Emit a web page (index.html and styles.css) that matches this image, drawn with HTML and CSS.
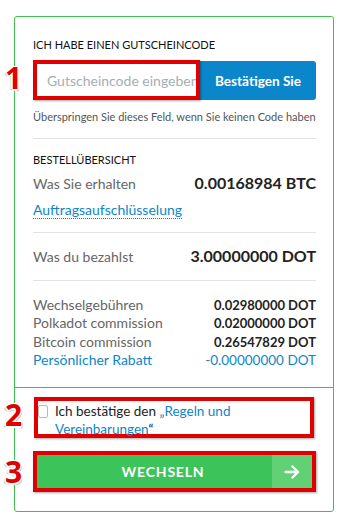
FILE: index.html
```html
<!DOCTYPE html>
<html lang="de">
<head>
<meta charset="utf-8">
<link rel="stylesheet" href="styles.css">
</head>
<body>
<div class="page">
  <div class="card">
    <div class="top">
      <div class="heading">ICH HABE EINEN GUTSCHEINCODE</div>
      <div class="promo">
        <input class="promo-input" type="text" placeholder="Gutscheincode eingeben">
        <button class="promo-btn">Bestätigen Sie</button>
      </div>
      <div class="hint">Überspringen Sie dieses Feld, wenn Sie keinen Code haben</div>
      <hr class="sep sep-1">
      <div class="heading heading-2">BESTELLÜBERSICHT</div>
      <div class="row big">
        <span class="label">Was Sie erhalten</span>
        <span class="value">0.00168984 BTC</span>
      </div>
      <div class="link-row"><a class="link">Auftragsaufschlüsselung</a></div>
      <hr class="sep sep-2">
      <div class="row big">
        <span class="label">Was du bezahlst</span>
        <span class="value">3.00000000 DOT</span>
      </div>
      <hr class="sep sep-3">
      <div class="fees">
        <div class="row small"><span class="label">Wechselgebühren</span><span class="value">0.02980000 DOT</span></div>
        <div class="row small"><span class="label">Polkadot commission</span><span class="value">0.02000000 DOT</span></div>
        <div class="row small"><span class="label">Bitcoin commission</span><span class="value">0.26547829 DOT</span></div>
        <div class="row small blue"><span class="label">Persönlicher Rabatt</span><span class="value">-0.00000000 DOT</span></div>
      </div>
    </div>
    <div class="bottom">
      <div class="agree">
        <span class="checkbox"></span>
        <p class="agree-text">
          <span class="line">Ich bestätige den <span class="blue-text">„Regeln und</span></span>
          <span class="line"><span class="blue-text">Vereinbarungen</span>“</span>
        </p>
      </div>
      <div class="submit-wrap">
        <button class="submit">
          <span class="submit-label">WECHSELN</span>
          <span class="submit-arrow">
            <svg width="16" height="14" viewBox="0 0 16 14"><path d="M1.5 7H14M8.5 1.5L14 7L8.5 12.5" fill="none" stroke="#fff" stroke-width="2.4" stroke-linecap="round" stroke-linejoin="round"/></svg>
          </span>
        </button>
      </div>
    </div>
  </div>
  <span class="num num-1">1</span>
  <span class="num num-2">2</span>
  <span class="num num-3">3</span>
</div>
</body>
</html>
```

FILE: styles.css
```css
* { box-sizing: border-box; }
html, body { margin: 0; padding: 0; background: #fff; }
body {
  font-family: Lato, "Open Sans", "Liberation Sans", sans-serif;
  color: #222;
  width: 349px;
  height: 525px;
  overflow: hidden;
}
.page {
  position: relative;
  padding: 16px 0 0 14px;
}
.card {
  width: 320px;
  height: 496px;
  border: 1px solid #3fbf50;
  border-radius: 3px;
  display: flex;
  flex-direction: column;
}
.top {
  padding: 21px 17px 0 18px;
  height: 371px;
  border-bottom: 1px solid #3fbf50;
}
.heading {
  font-size: 11px;
  line-height: 14px;
  color: #111;
}
.promo {
  display: flex;
  margin-top: 8px;
  height: 40px;
}
.promo-input {
  width: 167px;
  height: 40px;
  border: 4px solid #e00000;
  box-shadow: 1px 1px 2px rgba(0,0,0,0.35);
  padding: 0 0 0 10px;
  font-family: Lato, "Open Sans", sans-serif;
  font-size: 14px;
  color: #333;
  outline: none;
  margin: 0;
  border-radius: 0;
  position: relative;
  z-index: 1;
}
.promo-input::placeholder { color: #a7adb5; }
.promo-btn {
  flex: 1;
  height: 39px;
  margin: 1px 0 0 0;
  border: none;
  background: #0b86cb;
  color: #fff;
  font-family: Lato, "Open Sans", sans-serif;
  font-weight: 700;
  font-size: 13.6px;
  border-radius: 0 3px 3px 0;
  padding: 0;
}
.hint {
  font-size: 11px;
  line-height: 14px;
  color: #555;
  margin-top: 10px;
  white-space: nowrap;
}
.sep {
  border: none;
  border-top: 1px solid #e3e3e3;
  margin: 0;
}
.sep-1 { margin-top: 14px; }
.heading-2 { margin-top: 14px; }
.row {
  display: flex;
  justify-content: space-between;
  align-items: baseline;
}
.row.big { margin-top: 6px; }
.row.big .label { font-size: 14px; color: #666; }
.row.big .value { font-size: 16px; font-weight: 700; color: #222; }
.link-row { margin-top: 8px; line-height: 18px; }
.link {
  font-size: 14px;
  color: #0b86cb;
  text-decoration: none;
  border-bottom: 1px dotted #0b86cb;
}
.sep-2 { margin-top: 13px; }
.sep-2 + .row.big { margin-top: 13px; }
.sep-3 { margin-top: 15px; }
.fees { margin-top: 15px; }
.row.small { line-height: 18.4px; }
.row.small .label { font-size: 14px; color: #666; }
.row.small .value { font-size: 13px; font-weight: 700; color: #222; }
.row.small.blue .label, .row.small.blue .value { color: #0b86cb; font-weight: 400; }
.row.small.blue .value { font-size: 13.5px; }
.bottom {
  padding: 9px 17px 0 18px;
}
.agree {
  display: flex;
  align-items: flex-start;
  margin-left: 1px;
  width: 280px;
  height: 41px;
  border: 4px solid #e00000;
  box-shadow: 1px 1px 2px rgba(0,0,0,0.35);
  padding: 1px 0 0 0;
}
.checkbox {
  width: 10px;
  height: 13px;
  border: 1px solid #bbb;
  border-radius: 2px;
  margin: 3px 7px 0 0;
  flex: none;
}
.agree-text {
  margin: 0;
  font-size: 13.5px;
  line-height: 18px;
  color: #222;
}
.line { display: block; white-space: nowrap; }
.blue-text { color: #0b86cb; }
.submit-wrap {
  margin-top: 13px;
  width: 283px;
  height: 41px;
  border: 4px solid #e00000;
  box-shadow: 1px 1px 2px rgba(0,0,0,0.35);
}
.submit {
  width: 100%;
  height: 100%;
  display: flex;
  border: none;
  padding: 0;
  background: #3cc45a;
}
.submit-label {
  flex: 1;
  display: flex;
  align-items: center;
  justify-content: center;
  padding-left: 17px;
  color: #fff;
  font-family: Lato, "Open Sans", sans-serif;
  font-weight: 700;
  font-size: 14px;
  letter-spacing: 0.8px;
}
.submit-arrow {
  width: 40px;
  background: #62d074;
  display: flex;
  align-items: center;
  justify-content: center;
}
.num {
  position: absolute;
  left: 5px;
  font-family: "Open Sans", "Liberation Sans", sans-serif;
  font-weight: 700;
  font-size: 30px;
  line-height: 30px;
  color: #e00000;
  text-shadow: -1px -1px 0 #fff, 1px -1px 0 #fff, -1px 1px 0 #fff, 1px 1px 0 #fff, 0 2px 0 #fff, -2px 0 0 #fff, 1px 2px 1px #888, -2px 1px 1px #999;
}
.num-1 { top: 63px; }
.num-2 { top: 400px; }
.num-3 { top: 457px; }
```
